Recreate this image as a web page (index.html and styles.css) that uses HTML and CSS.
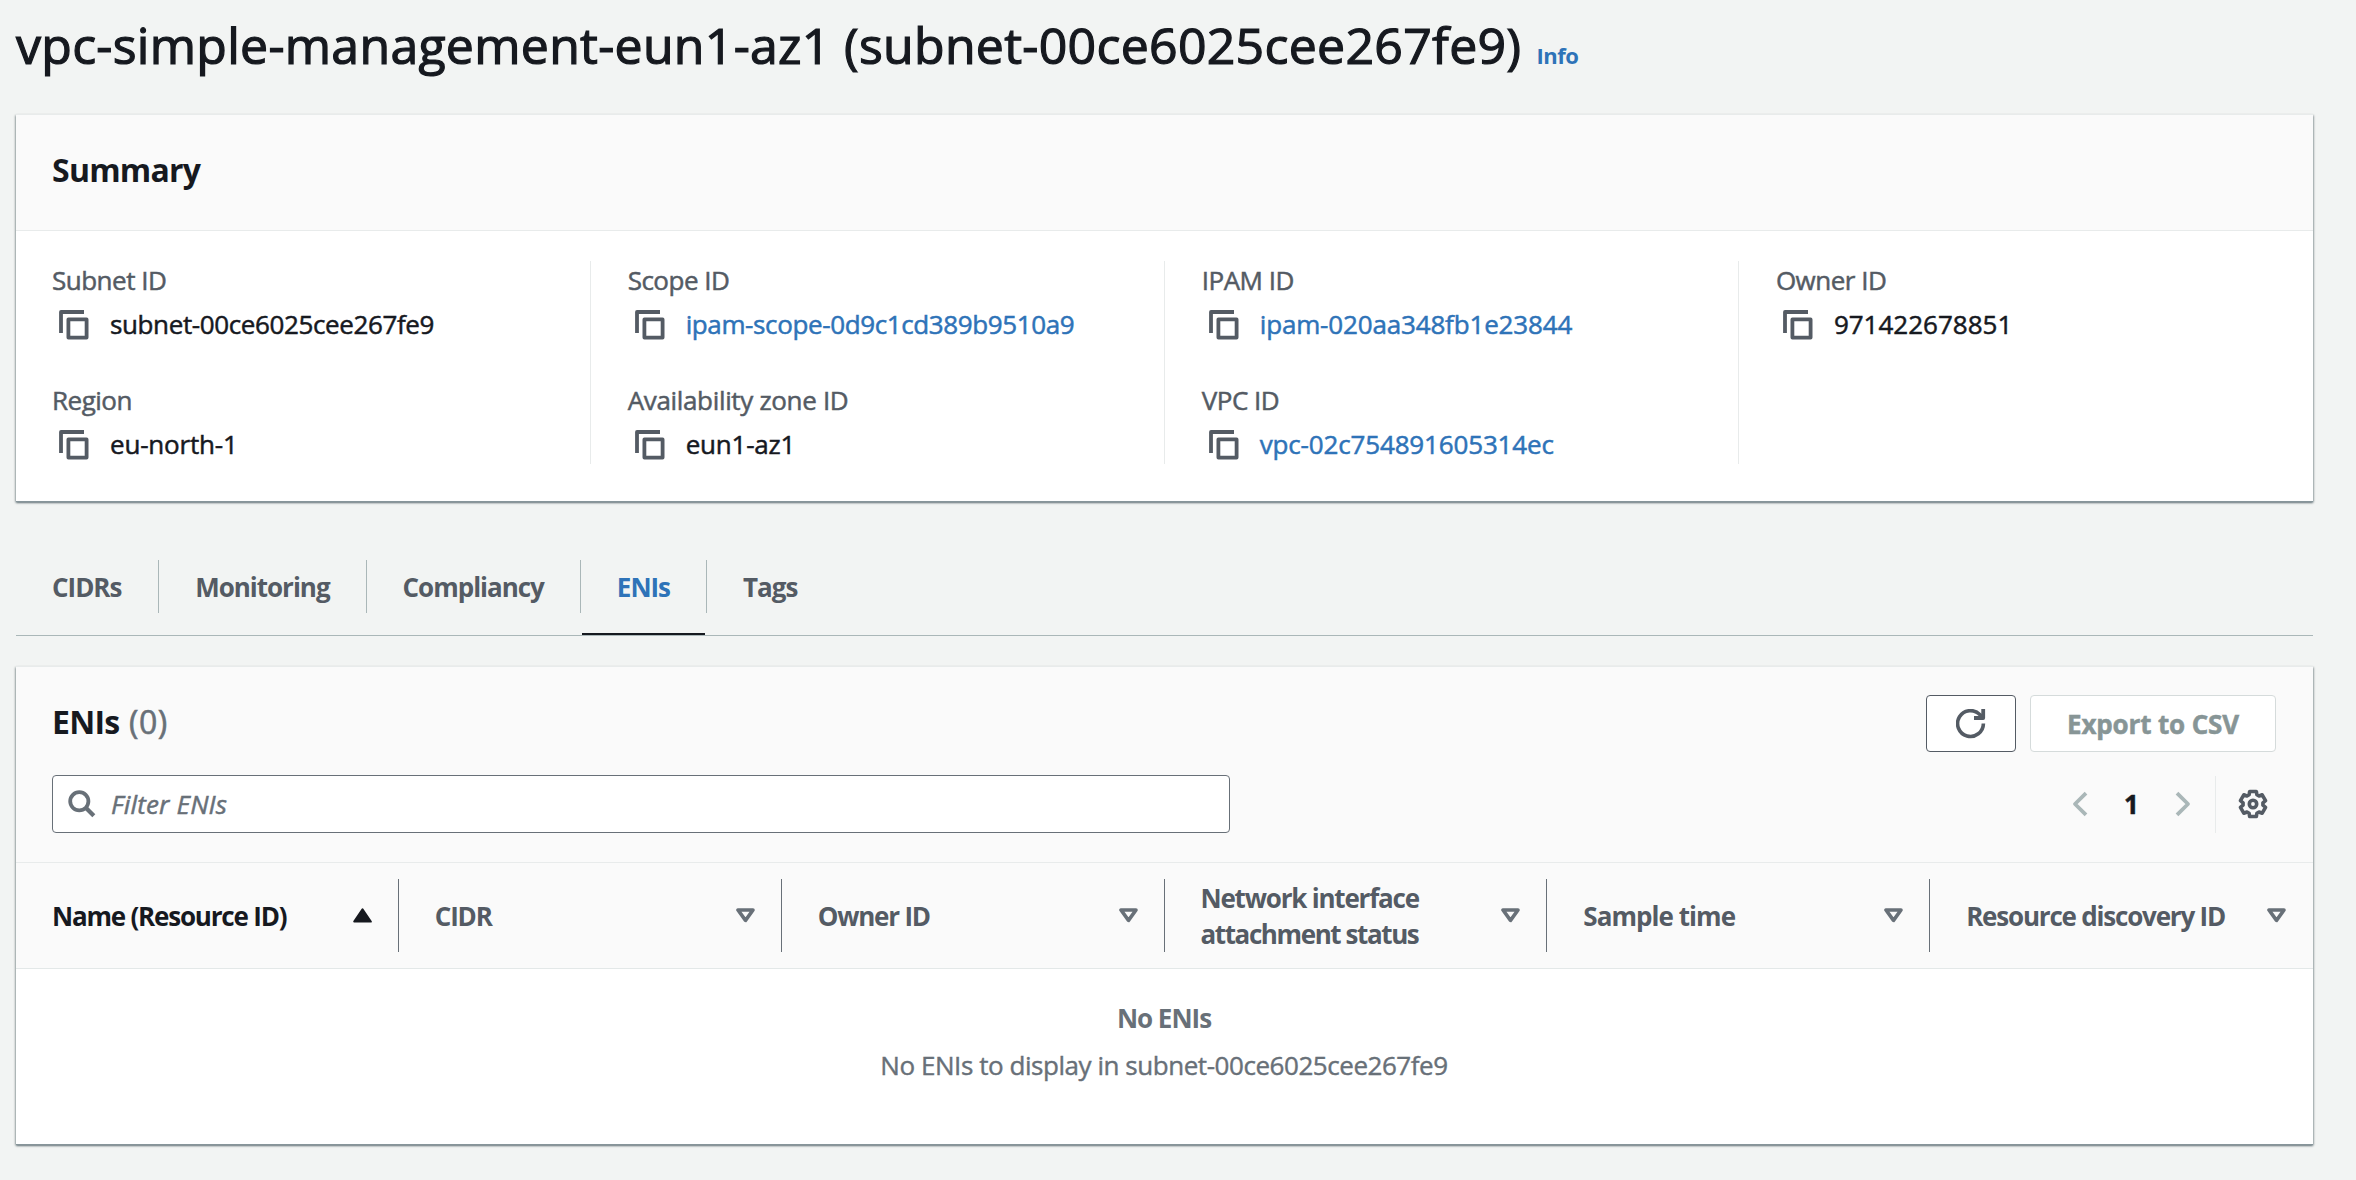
FILE: index.html
```
<!DOCTYPE html>
<html lang="en">
<head>
<meta charset="utf-8">
<title>vpc-simple-management-eun1-az1</title>
<link rel="stylesheet" href="styles.css">
</head>
<body>
<svg class="defs" width="0" height="0" aria-hidden="true">
  <symbol id="copy" viewBox="0 0 30 30"><path d="M2 23V2H25" stroke-width="3.8"/><rect x="9.4" y="9.4" width="18.2" height="18.2" stroke-width="3.8"/></symbol>
  <symbol id="sort-down" viewBox="0 0 19 15"><path d="M2 2H17L9.5 12.4Z" stroke-width="3.6"/></symbol>
  <symbol id="sort-up" viewBox="0 0 19 15"><path d="M9.5 1.4 17.8 13.6H1.2Z" fill="currentColor" stroke-width="2"/></symbol>
</svg>
<main class="page">
  <header class="title">
    <h1>vpc-simple-management-eun1-az1 (subnet-00ce6025cee267fe9)</h1>
    <a class="info">Info</a>
  </header>

  <section class="card">
    <div class="card-header"><h2>Summary</h2></div>
    <div class="summary">
      <div class="column">
        <div class="field"><div class="label">Subnet ID</div><div class="value"><svg class="copy"><use href="#copy"/></svg><span class="hex">subnet-00ce6025cee267fe9</span></div></div>
        <div class="field"><div class="label">Region</div><div class="value"><svg class="copy"><use href="#copy"/></svg><span>eu-north-1</span></div></div>
      </div>
      <div class="column">
        <div class="field"><div class="label">Scope ID</div><div class="value"><svg class="copy"><use href="#copy"/></svg><a class="hex">ipam-scope-0d9c1cd389b9510a9</a></div></div>
        <div class="field"><div class="label wide">Availability zone ID</div><div class="value"><svg class="copy"><use href="#copy"/></svg><span>eun1-az1</span></div></div>
      </div>
      <div class="column">
        <div class="field"><div class="label">IPAM ID</div><div class="value"><svg class="copy"><use href="#copy"/></svg><a class="digits">ipam-020aa348fb1e23844</a></div></div>
        <div class="field"><div class="label">VPC ID</div><div class="value"><svg class="copy"><use href="#copy"/></svg><a class="digits">vpc-02c754891605314ec</a></div></div>
      </div>
      <div class="column">
        <div class="field"><div class="label">Owner ID</div><div class="value"><svg class="copy"><use href="#copy"/></svg><span class="account">971422678851</span></div></div>
      </div>
    </div>
  </section>

  <nav class="tabs">
    <a class="tab">CIDRs</a>
    <a class="tab">Monitoring</a>
    <a class="tab">Compliancy</a>
    <a class="tab active">ENIs</a>
    <a class="tab">Tags</a>
  </nav>

  <section class="card">
    <div class="table-header">
      <div class="row">
        <h2>ENIs <span class="count">(0)</span></h2>
        <div class="actions">
          <button class="button refresh" aria-label="Refresh"><svg width="30" height="30" viewBox="0 0 30 30"><path d="M27.4 14.5A12.9 12.9 0 1 1 24 5.8L26.5 8.6" stroke-width="3.6"/><path d="M27.2 0V9H18" stroke-width="3.8"/></svg></button>
          <button class="button disabled">Export to CSV</button>
        </div>
      </div>
      <div class="row">
        <div class="search"><svg width="28" height="28" viewBox="0 0 28 28"><circle cx="11.3" cy="11.3" r="9.1" stroke-width="3.8"/><path d="M17.8 17.8 25.8 25.8" stroke-width="4.2"/></svg><span>Filter ENIs</span></div>
        <div class="paging">
          <svg class="arrow" width="16" height="26" viewBox="0 0 16 26"><path d="M14 2.2 3 13 14 23.8" stroke-width="3.8"/></svg>
          <span class="current">1</span>
          <svg class="arrow" width="16" height="26" viewBox="0 0 16 26"><path d="M2 2.2 13 13 2 23.8" stroke-width="3.8"/></svg>
          <div class="settings"><svg width="30" height="30" viewBox="0 0 30 30"><path stroke-width="3.6" d="M11.64 2.44H18.36L18.9 5.8 21 7 24.19 5.81 27.56 11.64 24.93 13.8V16.2L27.56 18.36 24.19 24.19 21 23 18.9 24.2 18.36 27.56H11.64L11.1 24.2 9 23 5.81 24.19 2.44 18.36 5.07 16.2V13.8L2.44 11.64 5.81 5.81 9 7 11.1 5.8Z"/><circle cx="15" cy="15" r="3.7" stroke-width="3.6"/></svg></div>
        </div>
      </div>
    </div>
    <div class="columns">
      <div class="th sorted"><span>Name (Resource ID)</span><svg class="sort"><use href="#sort-up"/></svg></div>
      <div class="th"><span>CIDR</span><svg class="sort"><use href="#sort-down"/></svg></div>
      <div class="th"><span>Owner ID</span><svg class="sort"><use href="#sort-down"/></svg></div>
      <div class="th"><span>Network interface<br><span class="tight">attachment status</span></span><svg class="sort"><use href="#sort-down"/></svg></div>
      <div class="th"><span class="loose">Sample time</span><svg class="sort"><use href="#sort-down"/></svg></div>
      <div class="th"><span>Resource discovery ID</span><svg class="sort"><use href="#sort-down"/></svg></div>
    </div>
    <div class="empty">
      <strong>No ENIs</strong>
      <span>No ENIs to display in subnet-00ce6025cee267fe9</span>
    </div>
  </section>
</main>
</body>
</html>
```
FILE: styles.css
```
* { box-sizing: border-box; }
body {
  min-height: 100vh;
  margin: 0;
  background: #f2f4f3;
  color: #16191f;
  font: 400 26px/36px "Open Sans", "Noto Sans", sans-serif;
  -webkit-text-stroke: 0.5px currentColor;
}
h1, h2 { margin: 0; }
svg { display: block; flex: none; fill: none; stroke: currentColor; stroke-linejoin: round; }
.defs { position: absolute; }
a { color: #2e73b8; }
.page { width: 2313px; padding: 9px 0 0 16px; }

.title { display: flex; align-items: baseline; gap: 15px; height: 72px; margin-bottom: 33px; }
h1 { font-size: 50px; font-weight: 400; line-height: 72px; letter-spacing: 0.28px; white-space: nowrap; -webkit-text-stroke-width: 1.2px; }
.info { font-size: 22px; font-weight: 700; letter-spacing: -0.5px; -webkit-text-stroke-width: 0; }

.card {
  background: #fff;
  border-top: 1px solid #e8ebeb;
  box-shadow: 0 1px 0 0 #87959a, 0 2px 2px 0 rgba(0, 28, 36, .5), 1px 1px 2px 0 rgba(0, 28, 36, .2), -1px 1px 2px 0 rgba(0, 28, 36, .2);
}
.card-header { background: #fafafa; border-bottom: 1px solid #e8ebeb; padding: 35px 36px 40px; }
h2 { font-size: 32px; line-height: 40px; font-weight: 700; letter-spacing: -0.75px; -webkit-text-stroke-width: 0; }
.count { margin-left: 2px; font-weight: 400; color: #687078; letter-spacing: 0.5px; -webkit-text-stroke-width: 0.6px; }

.summary { display: grid; grid-template-columns: repeat(4, 1fr); padding: 30px 0.5px 37px 0; }
.column { display: flex; flex-direction: column; gap: 40px; height: 203px; padding: 1px 0 0 36px; }
.column + .column { border-left: 1px solid #e8ebeb; padding-left: 36.5px; }
.field { display: flex; flex-direction: column; gap: 8px; }
.label { color: #545b64; letter-spacing: -0.5px; }
.label.wide { letter-spacing: -0.33px; }
.value { display: flex; align-items: center; gap: 21px; padding-left: 7px; letter-spacing: -0.2px; }
.hex { letter-spacing: -0.38px; }
.digits { letter-spacing: -0.16px; }
.account { letter-spacing: 0; }
.copy { width: 30px; height: 30px; margin-top: 1px; color: #545b64; }

.tabs { display: flex; margin: 59px 0 30px; padding-bottom: 22px; border-bottom: 1px solid #aab7b8; }
.tab {
  position: relative;
  height: 53px;
  padding: 9px 36px 8px;
  border-right: 1px solid #aab7b8;
  color: #545b64;
  font-weight: 700;
  letter-spacing: -1.02px;
  -webkit-text-stroke-width: 0;
}
.tab:first-child { padding-right: 36.8px; }
.tab:last-child { border-right: 0; }
.tab.active { color: #2e73b8; }
.tab.active::after { content: ""; position: absolute; left: 1px; right: 1px; bottom: -22px; height: 2px; background: #16191f; }

.table-header { display: flex; flex-direction: column; gap: 23px; background: #fafafa; padding: 28px 37px 29px 36px; border-bottom: 1px solid #e8ebeb; }
.row { display: flex; justify-content: space-between; align-items: center; }
.row h2 { margin-bottom: 4px; }
.actions { display: flex; gap: 14px; }
.button {
  display: flex;
  justify-content: center;
  align-items: center;
  width: 246px;
  height: 57px;
  padding: 0;
  border: 1px solid #545b64;
  border-radius: 4px;
  background: #fff;
  color: #545b64;
  font: 700 26px/36px "Open Sans", "Noto Sans", sans-serif;
  letter-spacing: -0.15px;
}
.button.refresh { width: 90px; }
.button.disabled { color: #879596; border-color: #d5dbdb; }
.search {
  display: flex;
  align-items: center;
  gap: 15px;
  width: 1178px;
  height: 58px;
  padding-left: 15px;
  border: 1px solid #687078;
  border-radius: 4px;
  background: #fff;
  color: #687078;
  font-style: italic;
  letter-spacing: 0.2px;
}
.paging { display: flex; align-items: center; }
.arrow { color: #aab7b8; }
.current { width: 87px; text-align: center; font-weight: 700; }
.settings { display: flex; align-items: center; height: 57px; margin-left: 24px; padding: 0 8px 0 22px; border-left: 1px solid #e8ebeb; color: #545b64; }

.columns { display: grid; grid-template-columns: repeat(6, 1fr); padding: 16px 0; background: #fafafa; border-bottom: 1px solid #e3e8e8; }
.th {
  display: flex;
  justify-content: space-between;
  align-items: center;
  height: 73px;
  padding: 0 26px 0 36px;
  border-right: 1px solid #687078;
  color: #545b64;
  font-weight: 700;
  letter-spacing: -1.2px;
  -webkit-text-stroke-width: 0;
}
.th:last-child { border-right-color: transparent; }
.th.sorted { color: #16191f; }
.th .loose { letter-spacing: -0.95px; }
.th .tight { letter-spacing: -1.4px; }
.sort { width: 19px; height: 15px; color: #687078; }
.sorted .sort { color: #16191f; }

.empty { display: flex; flex-direction: column; align-items: center; gap: 11px; padding: 31px 1px 61px 0; color: #687078; letter-spacing: -0.45px; -webkit-text-stroke-width: 0.4px; }
.empty strong { font-weight: 700; letter-spacing: -1px; -webkit-text-stroke-width: 0; }
```
